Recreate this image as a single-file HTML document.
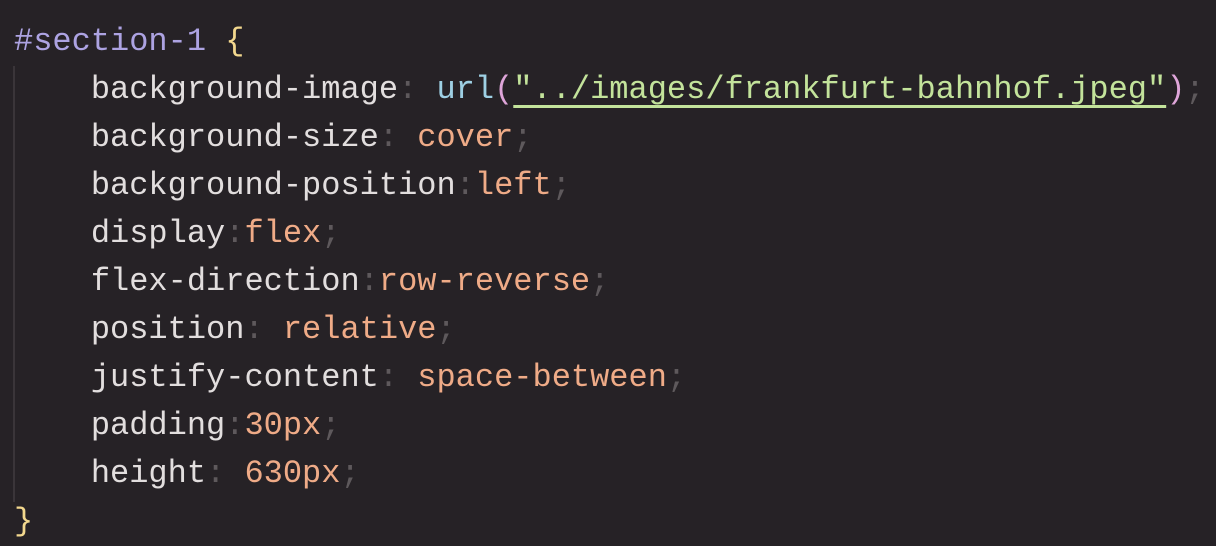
<!DOCTYPE html><html><head><style>
body{margin:0;background:#262226;width:1216px;height:546px;overflow:hidden;}
pre{margin:0;position:absolute;left:14px;top:18px;font:32px/48px "Liberation Mono",monospace;color:#e2dede;}
.g{position:absolute;left:13px;top:66px;width:2px;height:436px;background:#3a3539;}
.s{color:#ada3e2}.b{color:#f3d88e}.c{color:#5e595c}.u{color:#9ed0e4}.p{color:#dfa5d9}.t{color:#c3e39b;text-decoration:underline;text-decoration-thickness:3px;text-underline-offset:7px}.v{color:#efab87}
</style></head><body><div class="g"></div><pre><span class="s">#section-1</span> <span class="b">{</span>
    background-image<span class="c">:</span> <span class="u">url</span><span class="p">(</span><span class="t">"../images/frankfurt-bahnhof.jpeg"</span><span class="p">)</span><span class="c">;</span>
    background-size<span class="c">:</span> <span class="v">cover</span><span class="c">;</span>
    background-position<span class="c">:</span><span class="v">left</span><span class="c">;</span>
    display<span class="c">:</span><span class="v">flex</span><span class="c">;</span>
    flex-direction<span class="c">:</span><span class="v">row-reverse</span><span class="c">;</span>
    position<span class="c">:</span> <span class="v">relative</span><span class="c">;</span>
    justify-content<span class="c">:</span> <span class="v">space-between</span><span class="c">;</span>
    padding<span class="c">:</span><span class="v">30px</span><span class="c">;</span>
    height<span class="c">:</span> <span class="v">630px</span><span class="c">;</span>
<span class="b">}</span></pre></body></html>
